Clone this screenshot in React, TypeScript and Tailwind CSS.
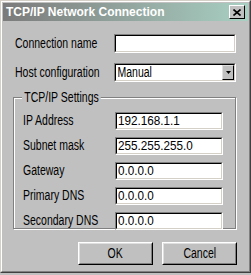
import React from 'react';

const body = "font-['Liberation_Sans',Arial,sans-serif] text-[14px] text-black";

// reference uses a tall, narrow bitmap font: squeeze Arial horizontally
const T = ({ children, className = '' }: { children: React.ReactNode; className?: string }) => (
  <span className={`inline-block whitespace-nowrap scale-x-[0.75] ${className}`}>{children}</span>
);

const Field = ({ value = '', className = '' }: { value?: string; className?: string }) => (
  <div className={`border border-t-[#808080] border-l-[#808080] border-r-white border-b-white ${className}`}>
    <div className="h-full border border-t-black border-l-black border-r-[#d4d0c8] border-b-[#d4d0c8] bg-white flex items-center pl-[1px] leading-none">
      <span className="inline-block whitespace-nowrap text-[13px] scale-x-[0.9] origin-left">{value}</span>
    </div>
  </div>
);

const Btn = ({ label }: { label: string }) => (
  <div className="w-[75px] h-[23px] border border-t-white border-l-white border-r-black border-b-black">
    <div className="h-full border border-t-[#dfdfdf] border-l-[#dfdfdf] border-r-[#808080] border-b-[#808080] flex items-center justify-center">
      <T>{label}</T>
    </div>
  </div>
);

const rows = [
  ['IP Address', '192.168.1.1'],
  ['Subnet mask', '255.255.255.0'],
  ['Gateway', '0.0.0.0'],
  ['Primary DNS', '0.0.0.0'],
  ['Secondary DNS', '0.0.0.0'],
];

export default function App() {
  return (
    <div className={`w-[251px] h-[275px] bg-[#c0c0c0] ${body}`}>
      <div className="h-[273px] border border-t-[#d4d0c8] border-l-[#d4d0c8] border-r-[#404040] border-b-[#404040]">
        <div className="h-full border border-t-white border-l-white border-r-[#808080] border-b-[#808080] p-[1px] flex flex-col">
          {/* title bar */}
          <div className="h-[18px] shrink-0 bg-gradient-to-r from-[#7b7b7b] to-[#a8d0c2] flex items-center justify-between pl-[3px] pr-[3px]">
            <span className="font-bold text-[12px] text-white leading-none">TCP/IP Network Connection</span>
            <div className="w-[16px] h-[14px] bg-[#c0c0c0] border border-t-white border-l-white border-r-black border-b-black flex items-center justify-center">
              <svg width="8" height="7" viewBox="0 0 8 7">
                <path d="M0.5 0.5 L7.5 6.5 M7.5 0.5 L0.5 6.5" stroke="black" strokeWidth="1.6" />
              </svg>
            </div>
          </div>

          <div className="pl-[12px] pr-[12px]">
            <div className="mt-[12px] flex items-center">
              <div className="w-[99px]">
                <T className="origin-left">Connection name</T>
              </div>
              <Field className="w-[122px] h-[19px]" />
            </div>
            <div className="mt-[8px] flex items-center">
              <div className="w-[99px]">
                <T className="origin-left">Host configuration</T>
              </div>
              <div className="w-[122px] h-[19px] border border-t-[#808080] border-l-[#808080] border-r-white border-b-white">
                <div className="h-full border border-t-black border-l-black border-r-[#d4d0c8] border-b-[#d4d0c8] bg-white flex items-center justify-between">
                  <T className="origin-left pl-[2px]">Manual</T>
                  <div className="w-[12px] h-full bg-[#c0c0c0] border border-t-[#dfdfdf] border-l-[#dfdfdf] border-r-black border-b-black flex items-center justify-center">
                    <svg width="5" height="3" viewBox="0 0 5 3">
                      <path d="M0 0 H5 L2.5 3 Z" fill="black" />
                    </svg>
                  </div>
                </div>
              </div>
            </div>
          </div>

          {/* group box */}
          <div className="relative ml-[10px] mr-[12px] mt-[14px] h-[132px] shrink-0 border border-[#808080] shadow-[inset_1px_1px_0_#fff,1px_1px_0_#fff] pt-[12px] pl-[9px] flex flex-col gap-[4px]">
            <span className="absolute left-[8px] top-[-9px] leading-[16px] whitespace-nowrap scale-x-[0.75] origin-left bg-[#c0c0c0] px-[3px]">
              TCP/IP Settings
            </span>
            {rows.map(([l, v]) => (
              <div key={l} className="flex items-center">
                <div className="w-[92px]">
                  <T className="origin-left">{l}</T>
                </div>
                <Field value={v} className="w-[108px] h-[18px]" />
              </div>
            ))}
          </div>

          <div className="mt-[13px] mr-[11px] flex justify-end gap-[9px]">
            <Btn label="OK" />
            <Btn label="Cancel" />
          </div>
        </div>
      </div>
    </div>
  );
}
